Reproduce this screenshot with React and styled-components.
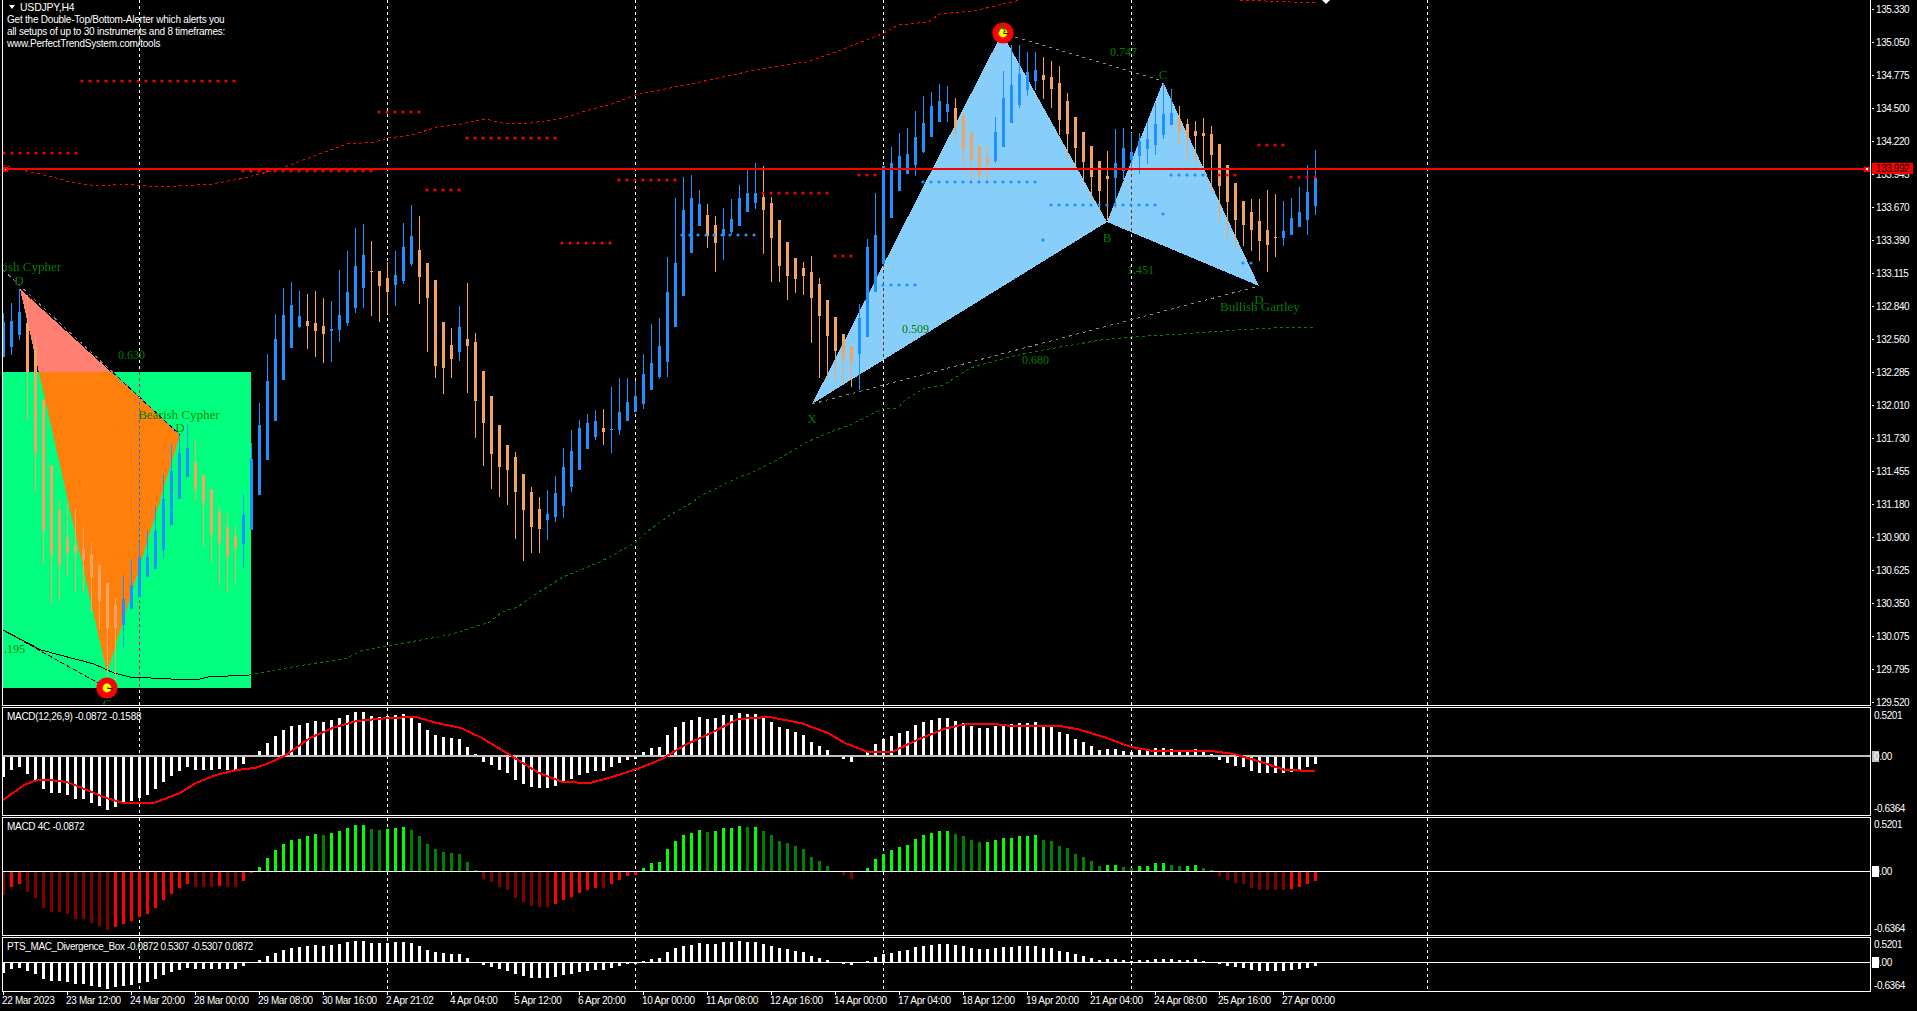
import React from "react";
import styled, { createGlobalStyle } from "styled-components";

const GlobalStyle = createGlobalStyle`
  html, body {
    margin: 0;
    padding: 0;
    background: #000;
  }
  body {
    font-family: "Liberation Sans", Arial, sans-serif;
  }
`;

const BLUE = "#1e90ff";
const SAND = "#f4a460";
const CHART_W = 1867;

// every candle: [bullish, wickTop, wickBottom, bodyTop, bodyBottom] in chart pixels
const CANDLES = [
  [1,313,357,322,357],[1,303,355,321,347],[1,289,340,312,335],[0,295,421,323,372],[0,335,492,347,453],
  [0,400,565,400,531],[0,465,605,465,555],[0,500,601,510,565],[0,503,576,537,553],[0,508,592,545,553],
  [0,527,592,549,561],[0,542,612,555,577],[0,565,630,565,601],[0,583,677,583,628],[0,598,680,605,628],
  [1,575,647,599,625],[1,559,609,585,609],[1,543,597,557,597],[1,530,577,557,577],[1,506,569,531,569],
  [1,474,559,499,550],[1,444,525,471,525],[1,435,499,453,499],[1,424,477,448,477],[0,440,501,462,489],
  [0,475,547,475,503],[0,489,563,489,535],[0,507,585,511,543],[0,513,592,527,557],[0,526,585,536,549],
  [1,494,568,515,544],[1,443,530,459,530],[1,403,495,425,495],[1,354,460,381,460],[1,314,421,339,421],
  [1,288,380,315,380],[1,282,348,305,348],[1,291,328,316,327],[0,294,349,321,326],[0,291,357,323,331],
  [0,298,363,326,334],[1,301,362,329,331],[1,270,342,315,330],[1,251,326,292,323],[1,228,313,266,308],
  [1,224,308,255,288],[0,241,316,271,272],[0,271,322,271,286],[0,262,313,278,292],[1,251,306,275,285],
  [1,223,284,247,281],[1,205,266,236,264],[0,216,304,250,277],[0,263,352,263,298],[0,280,378,280,366],
  [0,322,394,322,368],[0,328,378,345,359],[1,306,361,327,352],[0,283,393,339,346],[0,333,438,342,401],
  [0,371,466,371,423],[0,396,489,396,454],[0,425,497,425,467],[0,445,505,445,470],[0,452,539,457,492],
  [0,474,561,474,510],[0,487,553,492,527],[0,497,553,509,529],[1,490,540,514,520],[1,476,522,493,517],
  [1,448,518,467,506],[1,430,492,451,487],[1,420,470,428,470],[1,414,449,423,449],[1,410,440,421,437],
  [0,409,445,428,432],[1,387,453,429,430],[1,378,435,412,430],[1,378,421,402,421],[1,381,412,396,412],
  [1,354,409,374,404],[1,324,390,363,390],[1,318,379,346,377],[1,257,377,292,362],[1,198,327,263,327],
  [1,177,296,210,296],[1,175,253,198,253],[1,190,226,204,226],[0,204,248,215,236],[0,216,272,225,243],
  [1,208,260,229,236],[1,199,234,219,232],[1,185,226,198,226],[1,170,212,193,212],[1,163,209,193,203],
  [0,166,254,197,210],[0,197,282,203,238],[0,220,282,220,266],[0,242,300,242,276],[0,258,293,258,279],
  [0,262,295,268,276],[0,256,343,272,298],[0,278,378,284,316],[0,300,380,300,336],[0,317,381,317,351],
  [0,334,382,334,359],[0,346,387,346,362],[1,304,390,318,354],[1,239,337,247,337],[1,193,292,235,292],
  [1,166,264,166,264],[1,147,218,163,218],[1,133,191,156,191],[1,128,174,154,174],[1,111,176,137,165],
  [1,96,153,123,152],[1,92,137,106,137],[1,84,122,101,122],[1,86,122,104,112],[0,98,139,108,126],
  [0,114,165,115,150],[0,132,180,132,160],[0,146,181,146,175],[0,145,181,158,163],[1,117,163,132,161],
  [1,71,147,98,147],[1,45,123,85,123],[1,45,108,74,105],[1,52,96,72,90],[1,52,90,70,81],
  [0,57,99,75,80],[0,61,108,77,89],[0,66,135,83,120],[0,93,159,101,134],[0,117,166,117,148],
  [0,132,181,132,162],[0,146,200,146,177],[0,161,211,161,191],[0,151,220,176,179],[1,129,208,163,178],
  [1,128,180,148,171],[1,133,169,152,160],[1,133,174,141,156],[1,121,164,139,149],[1,103,155,124,145],
  [1,83,139,114,135],[1,89,125,113,125],[0,106,146,119,131],[0,119,159,124,138],[0,121,164,131,136],
  [0,118,170,133,136],[0,126,193,134,155],[0,144,222,144,186],[0,165,241,165,202],[0,183,248,183,220],
  [0,201,246,201,225],[0,199,251,212,230],[0,199,261,221,241],[0,190,272,230,245],[0,194,257,237,238],
  [1,201,246,231,238],[1,198,235,218,235],[1,187,227,212,227],[1,165,235,192,220],[1,150,215,178,206],
];

// MACD histogram, pixels from the zero line in the first sub window
const MACD = [
  -22,-15,-12,-19,-25,-34,-38,-38,-40,-44,-44,-48,-51,-55,-52,-49,-46,-43,-40,-34,
  -27,-21,-16,-12,-15,-15,-15,-14,-15,-15,-9,-2,4,12,19,25,29,30,32,34,
  33,35,37,40,43,43,39,38,39,40,41,38,32,25,20,18,17,16,8,1,
  -7,-10,-15,-18,-25,-29,-32,-33,-33,-31,-27,-24,-20,-18,-16,-16,-12,-8,-5,-4,
  3,7,8,20,28,33,35,38,36,37,40,40,42,41,41,37,33,28,26,23,
  20,13,9,5,0,-4,-7,0,3,11,16,19,22,24,30,33,35,37,37,34,
  32,29,27,27,29,31,31,32,32,33,29,28,23,21,16,13,9,5,6,6,
  4,3,5,5,7,7,6,5,5,6,3,1,-5,-8,-11,-12,-16,-18,-18,-18,
  -18,-17,-15,-12,-9,
];

const SIGNAL = "3,800 24,785 37,780 49,780 67,782 82,788 106,798 124,803 154,803 180,793 196,783 216,775 237,770 255,768 269,763 286,755 310,738 335,727 357,721 388,718 416,717 437,723 461,728 482,738 510,755 539,773 563,782 590,783 612,777 640,768 662,759 685,745 711,733 738,719 769,717 801,723 828,733 845,743 868,752 892,752 917,740 944,729 966,724 995,724 1011,726 1060,726 1077,729 1104,737 1131,747 1153,751 1211,751 1234,754 1261,762 1285,770 1315,771";

const RED_MA = "2,165 22,170 53,177 69,182 98,186 122,184 159,187 212,184 245,178 282,168 322,153 347,144 375,142 388,138 412,135 437,127 461,124 486,119 506,124 531,123 563,118 592,109 612,104 635,95 700,82 760,69 806,62 836,52 882,34 898,25 928,22 940,14 974,11 1020,0";
const RED_MA_TAIL = "1240,0 1315,3";
const GREEN_MA_IN_BOX = "3,630 41,650 94,664 114,673 130,677 171,679 196,680 208,677 249,675";
const GREEN_MA = "249,675 286,668 347,658 363,650 387,646 449,635 490,622 502,612 518,607 531,597 563,577 600,562 633,544 652,528 670,515 693,502 700,496 723,485 737,478 753,472 777,460 790,452 807,442 830,432 850,425 882,409 898,408 905,400 925,388 944,385 970,368 1009,357 1043,350 1101,340 1131,337 1181,334 1238,330 1288,327 1313,328";

const DOT_RUNS = [
  [82, 235, 81, "#f00"], [4, 76, 153, "#f00"], [243, 371, 171, "#f00"], [379, 419, 112, "#f00"],
  [467, 555, 138, "#f00"], [427, 459, 190, "#f00"], [562, 611, 243, "#f00"], [619, 675, 180, "#f00"],
  [763, 827, 193, "#f00"], [859, 875, 175, "#f00"], [835, 851, 256, "#f00"], [1259, 1283, 145, "#f00"],
  [1219, 1235, 175, "#f00"], [1291, 1315, 177, "#f00"],
  [923, 1035, 182, BLUE], [1051, 1155, 205, BLUE], [1171, 1210, 175, BLUE], [883, 915, 285, BLUE],
  [682, 754, 235, BLUE], [1163, 1163, 214, BLUE], [1043, 1043, 240, BLUE], [1243, 1251, 263, BLUE],
];

const SEPARATORS = [139.5, 387.5, 635.5, 883.5, 1131.5, 1427.5];

const PRICES = [
  "135.330", "135.050", "134.775", "134.500", "134.220", "133.945", "133.670", "133.390", "133.115", "132.840", "132.560",
  "132.285", "132.010", "131.730", "131.455", "131.180", "130.900", "130.625", "130.350", "130.075", "129.795", "129.520",
];

const TIMES = [
  "22 Mar 2023", "23 Mar 12:00", "24 Mar 20:00", "28 Mar 00:00", "29 Mar 08:00", "30 Mar 16:00", "2 Apr 21:02",
  "4 Apr 04:00", "5 Apr 12:00", "6 Apr 20:00", "10 Apr 00:00", "11 Apr 08:00", "12 Apr 16:00", "14 Apr 00:00",
  "17 Apr 04:00", "18 Apr 12:00", "19 Apr 20:00", "21 Apr 04:00", "24 Apr 08:00", "25 Apr 16:00", "27 Apr 00:00",
];

const LEGEND_LINES = [
  "Get the Double-Top/Bottom-Alerter which alerts you",
  "all setups of up to 30 instruments and 8 timeframes:",
  "www.PerfectTrendSystem.com/tools",
];

const PATTERN_LABELS = [
  [61, 271, "end", 13, "Bearish Cypher"],
  [19, 285, "middle", 13, "D"],
  [118, 359, "start", 12, "0.630"],
  [179, 419, "middle", 13, "Bearish Cypher"],
  [180, 432, "middle", 13, "D"],
  [25, 653, "end", 12, "1.195"],
  [107, 708, "middle", 13, "C"],
  [1002, 32, "middle", 13, "A"],
  [1110, 56, "start", 12, "0.747"],
  [1163, 79, "middle", 13, "C"],
  [902, 333, "start", 12, "0.509"],
  [1107, 242, "middle", 13, "B"],
  [1127, 274, "start", 12, "1.451"],
  [812, 423, "middle", 13, "X"],
  [1259, 304, "middle", 13, "D"],
  [1220, 311, "start", 13, "Bullish Gartley"],
  [1022, 364, "start", 12, "0.680"],
];

const barX = (i) => 3.5 + 8 * i;

const Frame = styled.div`
  width: 1917px;
  height: 1011px;
  padding-left: 2px;
  box-sizing: border-box;
  display: flex;
  flex-direction: column;
  gap: 1px;
  overflow: hidden;
  background: #000;
  color: #fff;
`;

const Pane = styled.section`
  display: flex;
  height: ${({ $height }) => $height}px;
  flex: none;
`;

const ChartArea = styled.div`
  position: relative;
  width: ${CHART_W}px;
  flex: none;
  overflow: hidden;
  border: 1px solid #fff;
  border-top-width: ${({ $open }) => ($open ? 0 : 1)}px;
`;

const ChartSvg = styled.svg`
  display: block;
  width: ${CHART_W}px;
  height: 100%;
  isolation: isolate;
`;

const Crisp = styled.rect`
  shape-rendering: crispEdges;
`;

const Separator = styled.line`
  stroke: #fff;
  stroke-width: 1;
  stroke-dasharray: 3 3;
  shape-rendering: crispEdges;
  mix-blend-mode: difference;
`;

const SignalLine = styled.polyline`
  fill: none;
  stroke: #f00;
  stroke-width: 2;
  shape-rendering: crispEdges;
`;

const DashedCurve = styled.polyline`
  fill: none;
  stroke: ${({ $color }) => $color};
  stroke-width: 1;
  stroke-dasharray: ${({ $solid }) => ($solid ? "none" : "3 3")};
  shape-rendering: crispEdges;
`;

const PatternFill = styled.polygon`
  fill: ${({ $color }) => $color};
  shape-rendering: crispEdges;
  mix-blend-mode: ${({ $xor }) => ($xor ? "difference" : "normal")};
`;

const TrendLine = styled.line`
  stroke: ${({ $color }) => $color};
  stroke-width: 1;
  stroke-dasharray: ${({ $dash }) => $dash || "none"};
  shape-rendering: crispEdges;
`;

const PatternLabel = styled.text`
  font-family: "Liberation Serif", "Times New Roman", serif;
  fill: #008000;
`;

const Legend = styled.div`
  position: absolute;
  top: 1px;
  left: 4px;
  font-size: 10px;
  line-height: 12px;
  letter-spacing: -0.22px;
  white-space: nowrap;
`;

const SymbolRow = styled.div`
  display: flex;
  align-items: center;
  gap: 5px;
  margin: 0 0 1px 2px;
  font-size: 10.5px;
`;

const SymbolCaret = styled.span`
  width: 0;
  height: 0;
  border-left: 3.5px solid transparent;
  border-right: 3.5px solid transparent;
  border-top: 4px solid #fff;
`;

const IndicatorTitle = styled.div`
  position: absolute;
  top: 3px;
  left: 4px;
  font-size: 10px;
  line-height: 12px;
  letter-spacing: ${({ $tracking }) => $tracking}px;
  white-space: nowrap;
`;

const PriceAxis = styled.div`
  position: relative;
  flex: 1;
  display: flex;
  flex-direction: column;
  gap: 22px;
  padding-top: 4px;
`;

const AxisLabel = styled.span`
  position: relative;
  display: block;
  height: 11px;
  margin-top: ${({ $offset }) => $offset || 0}px;
  padding-left: ${({ $inset }) => $inset}px;
  font-size: 10px;
  line-height: 11px;
  letter-spacing: -0.42px;
  &::before {
    content: "";
    position: absolute;
    left: 1px;
    top: 5px;
    width: 2px;
    height: 1px;
    background: ${({ $tick }) => ($tick ? "#fff" : "transparent")};
  }
`;

const ZeroLabel = styled(AxisLabel)`
  &::after {
    content: "";
    position: absolute;
    z-index: -1;
    left: 1px;
    top: 0;
    width: 7px;
    height: 11px;
    background: ${({ $color }) => $color};
  }
`;

const SubAxis = styled.div`
  position: relative;
  z-index: 0;
  flex: 1;
`;

const PriceTag = styled.span`
  position: absolute;
  top: 163px;
  left: 1px;
  width: 41px;
  height: 11px;
  padding-left: 4px;
  box-sizing: border-box;
  background: #f00;
  color: #000;
  font-size: 10px;
  line-height: 11px;
  letter-spacing: -0.42px;
`;

const TimeAxis = styled.div`
  display: flex;
  flex: 1;
  margin-top: -1px;
  padding-left: 1px;
`;

const TimeCell = styled.span`
  position: relative;
  flex: none;
  width: 64px;
  padding-top: 3px;
  font-size: 10px;
  line-height: 12px;
  letter-spacing: -0.34px;
  white-space: nowrap;
  &::before {
    content: "";
    position: absolute;
    left: 0;
    top: 0;
    width: 1px;
    height: 3px;
    background: #fff;
  }
  & > b {
    font-weight: normal;
    margin-left: -1px;
  }
`;

function Separators({ top, bottom }) {
  return SEPARATORS.map((x) => <Separator key={x} x1={x} x2={x} y1={top} y2={bottom} />);
}

function Candles() {
  return CANDLES.map(([bull, wickTop, wickBottom, bodyTop, bodyBottom], i) => {
    const x = Math.floor(barX(i));
    const color = bull ? BLUE : SAND;
    return (
      <g key={i} fill={color}>
        <Crisp x={x} y={wickTop} width={1} height={wickBottom - wickTop} />
        <Crisp x={x - 1} y={bodyTop} width={3} height={Math.max(bodyBottom - bodyTop, 1)} />
      </g>
    );
  });
}

function DotRuns() {
  return DOT_RUNS.flatMap(([from, to, y, color]) => {
    const dots = [];
    for (let x = from; x <= to; x += 8) dots.push(x);
    return dots.map((x) => <circle key={`${x}-${y}`} cx={x} cy={y} r={1.6} fill={color} />);
  });
}

function Bullseye({ cx, cy }) {
  return (
    <g>
      <circle cx={cx} cy={cy} r={10.6} fill="#f00" />
      <circle cx={cx} cy={cy} r={4.4} fill="#ff0" />
      <line x1={cx} y1={cy} x2={cx + 6} y2={cy + 1} stroke="#000" />
    </g>
  );
}

function MainChart() {
  return (
    <ChartSvg viewBox={`3 0 ${CHART_W} 705`}>
      <Crisp x={3} y={372} width={248} height={316} fill="#00ff7f" />
      <PatternFill $xor $color="#ff8072" points="20,289 180,435 107,673" />
      <PatternFill $color="#87cefa" points="812,404 1002,33 1107,222" />
      <PatternFill $color="#87cefa" points="1107,222 1163,82 1259,286" />

      <TrendLine $color="#000" x1={3} y1={270} x2={180} y2={435} />
      <TrendLine $color="#888" $dash="3 4" x1={3} y1={270} x2={180} y2={435} />
      <TrendLine $color="#000" x1={3} y1={630} x2={107} y2={688} />
      <TrendLine $color="#888" $dash="3 4" x1={3} y1={630} x2={107} y2={688} />
      <TrendLine $color="#888" $dash="3 4" x1={1002} y1={33} x2={1163} y2={81} />
      <TrendLine $color="#888" $dash="3 4" x1={812} y1={404} x2={1259} y2={286} />

      <Separators top={0} bottom={705} />

      <DashedCurve $color="#f00" points={RED_MA} />
      <DashedCurve $color="#f00" points={RED_MA_TAIL} />
      <DashedCurve $color="#000" $solid points={GREEN_MA_IN_BOX} />
      <DashedCurve $color="#008000" points={GREEN_MA} />

      <Candles />
      <DotRuns />

      <Crisp x={3} y={168} width={CHART_W} height={2} fill="#f00" />
      <Crisp x={3} y={167} width={5} height={5} fill="#f00" />
      <Crisp x={5} y={169} width={1} height={1} fill="#fff" />
      <Crisp x={1864} y={167} width={6} height={5} fill="#f00" />
      <Crisp x={1866} y={168} width={2} height={2} fill="#fff" />
      <polygon points="1322,0 1330,0 1326,4" fill="#fff" />

      <Bullseye cx={1003} cy={33} />
      <Bullseye cx={107} cy={688} />

      {PATTERN_LABELS.map(([x, y, anchor, size, text]) => (
        <PatternLabel key={`${x}-${y}`} x={x} y={y} textAnchor={anchor} fontSize={size}>
          {text}
        </PatternLabel>
      ))}
    </ChartSvg>
  );
}

function histogramColor(value, prev, colored) {
  if (!colored) return "#fff";
  if (value >= 0) return value >= prev ? "#00ff00" : "#008000";
  return value > prev ? "#ff0000" : "#800000";
}

function Histogram({ zero, scale, colored }) {
  return MACD.map((value, i) => {
    const size = Math.round(Math.abs(value) * scale);
    return (
      <Crisp
        key={i}
        x={Math.floor(barX(i)) - 1}
        y={value >= 0 ? zero - size : zero}
        width={3}
        height={size}
        fill={histogramColor(value, i ? MACD[i - 1] : value, colored)}
      />
    );
  });
}

function SubChart({ top, height, zero, scale, colored, zeroColor, zeroSize, signal, title, tracking }) {
  return (
    <ChartArea>
      <ChartSvg viewBox={`3 ${top} ${CHART_W} ${height}`}>
        <Separators top={top} bottom={top + height} />
        <Histogram zero={zero} scale={scale} colored={colored} />
        <Crisp x={3} y={zero} width={CHART_W} height={zeroSize} fill={zeroColor} />
        {signal && <SignalLine points={SIGNAL} />}
      </ChartSvg>
      <IndicatorTitle $tracking={tracking}>{title}</IndicatorTitle>
    </ChartArea>
  );
}

function Scale({ first, zeroGap, lowGap, zeroColor }) {
  return (
    <SubAxis>
      <AxisLabel $inset={3} $offset={first}>0.5201</AxisLabel>
      <ZeroLabel $inset={3} $offset={zeroGap} $color={zeroColor}>0.00</ZeroLabel>
      <AxisLabel $inset={3} $offset={lowGap}>-0.6364</AxisLabel>
    </SubAxis>
  );
}

export default function App() {
  return (
    <Frame>
      <GlobalStyle />
      <Pane $height={706}>
        <ChartArea $open>
          <MainChart />
          <Legend>
            <SymbolRow>
              <SymbolCaret />
              USDJPY,H4
            </SymbolRow>
            {LEGEND_LINES.map((line) => (
              <div key={line}>{line}</div>
            ))}
          </Legend>
        </ChartArea>
        <PriceAxis>
          {PRICES.map((price) => (
            <AxisLabel key={price} $inset={5} $tick>{price}</AxisLabel>
          ))}
          <PriceTag>133.992</PriceTag>
        </PriceAxis>
      </Pane>
      <Pane $height={109}>
        <SubChart top={708} height={107} zero={755} scale={1} signal zeroColor="#c0c0c0" zeroSize={2} tracking={-0.3} title="MACD(12,26,9) -0.0872 -0.1588" />
        <Scale first={3} zeroGap={30} lowGap={41} zeroColor="#c0c0c0" />
      </Pane>
      <Pane $height={119}>
        <SubChart top={818} height={117} zero={871} scale={1.08} colored zeroColor="#fff" zeroSize={1} tracking={-0.3} title="MACD 4C -0.0872" />
        <Scale first={2} zeroGap={36} lowGap={46} zeroColor="#fff" />
      </Pane>
      <Pane $height={55}>
        <SubChart top={938} height={53} zero={962} scale={0.49} zeroColor="#fff" zeroSize={1} tracking={-0.39} title="PTS_MAC_Divergence_Box -0.0872 0.5307 -0.5307 0.0872" />
        <Scale first={2} zeroGap={7} lowGap={12} zeroColor="#fff" />
      </Pane>
      <TimeAxis>
        {TIMES.map((time) => (
          <TimeCell key={time}><b>{time}</b></TimeCell>
        ))}
      </TimeAxis>
    </Frame>
  );
}
